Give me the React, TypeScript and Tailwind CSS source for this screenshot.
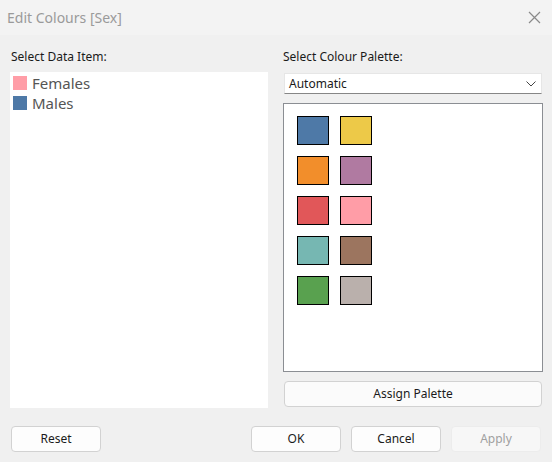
import { FC } from 'react';

const palette = [
  ['#4e79a7', '#edc948'],
  ['#f28e2b', '#b07aa1'],
  ['#e15759', '#ff9da7'],
  ['#76b7b2', '#9c755f'],
  ['#59a14f', '#bab0ac'],
];

const items = [
  { name: 'Females', color: '#ff9da7' },
  { name: 'Males', color: '#4e79a7' },
];

const Button: FC<{ label: string; disabled?: boolean; className?: string }> = ({ label, disabled, className }) => (
  <button
    className={`h-[26px] w-[90px] rounded-[4px] border text-[12px] leading-none ${
      disabled ? 'bg-[#f7f7f7] border-[#ececec] text-[#a0a0a0]' : 'bg-[#fdfdfd] border-[#d2d2d2] text-[#1b1b1b]'
    } ${className ?? ''}`}
  >
    {label}
  </button>
);

export default function App() {
  return (
    <div className="w-[552px] h-[462px] flex flex-col bg-[#f0f0f0] font-['Noto_Sans',sans-serif] overflow-hidden">
      <div className="h-[35px] flex items-center justify-between bg-[#f3f3f3] pl-[7px] pr-[11px]">
        <span className="text-[14px] text-[#9a9a9a]">Edit Colours [Sex]</span>
        <svg width="13" height="13" viewBox="0 0 13 13" className="mt-[-1px]">
          <path d="M1 1L12 12M12 1L1 12" stroke="#8a8a8a" strokeWidth="1.2" fill="none" />
        </svg>
      </div>

      <div className="flex gap-[15px] pl-[10px] pr-[9px] pt-[14px]">
        <div className="w-[258px] flex flex-col">
          <div className="pl-[1px] h-[16px] text-[12px] leading-[16px] text-[#1a1a1a]">Select Data Item:</div>
          <div className="mt-[7px] h-[336px] bg-white pt-[4px] pl-[3px] flex flex-col gap-[6px]">
            {items.map((item) => (
              <div key={item.name} className="flex items-center h-[14px] gap-[5px]">
                <div className="w-[14px] h-[14px]" style={{ backgroundColor: item.color }} />
                <span className="text-[15px] leading-none text-[#555]">{item.name}</span>
              </div>
            ))}
          </div>
        </div>

        <div className="w-[260px] flex flex-col">
          <div className="h-[16px] text-[12px] leading-[16px] text-[#1a1a1a]">Select Colour Palette:</div>
          <div className="mt-[8px] ml-[1px] mr-[1px] h-[21px] bg-white border border-[#e6e6e6] border-b-[#868686] flex items-center justify-between pl-[4px] pr-[5px]">
            <span className="text-[12px] text-[#1a1a1a]">Automatic</span>
            <svg width="10" height="6" viewBox="0 0 10 6">
              <path d="M0.5 0.5L5 5L9.5 0.5" stroke="#444" strokeWidth="1" fill="none" />
            </svg>
          </div>
          <div className="mt-[9px] h-[269px] bg-white border border-[#8b8e93] pt-[12px] pl-[13px] flex flex-col gap-[11px]">
            {palette.map((row, i) => (
              <div key={i} className="flex gap-[11px]">
                {row.map((c) => (
                  <div key={c} className="w-[32px] h-[29px] border border-black" style={{ backgroundColor: c }} />
                ))}
              </div>
            ))}
          </div>
          <button className="mt-[9px] mx-[1px] h-[26px] rounded-[4px] border border-[#d2d2d2] bg-[#fbfbfb] text-[12px] text-[#1b1b1b]">
            Assign Palette
          </button>
        </div>
      </div>

      <div className="flex items-center mt-[18px] pl-[11px] pr-[11px]">
        <Button label="Reset" />
        <div className="flex-1" />
        <div className="flex gap-[10px]">
          <Button label="OK" />
          <Button label="Cancel" />
          <Button label="Apply" disabled />
        </div>
      </div>
    </div>
  );
}
